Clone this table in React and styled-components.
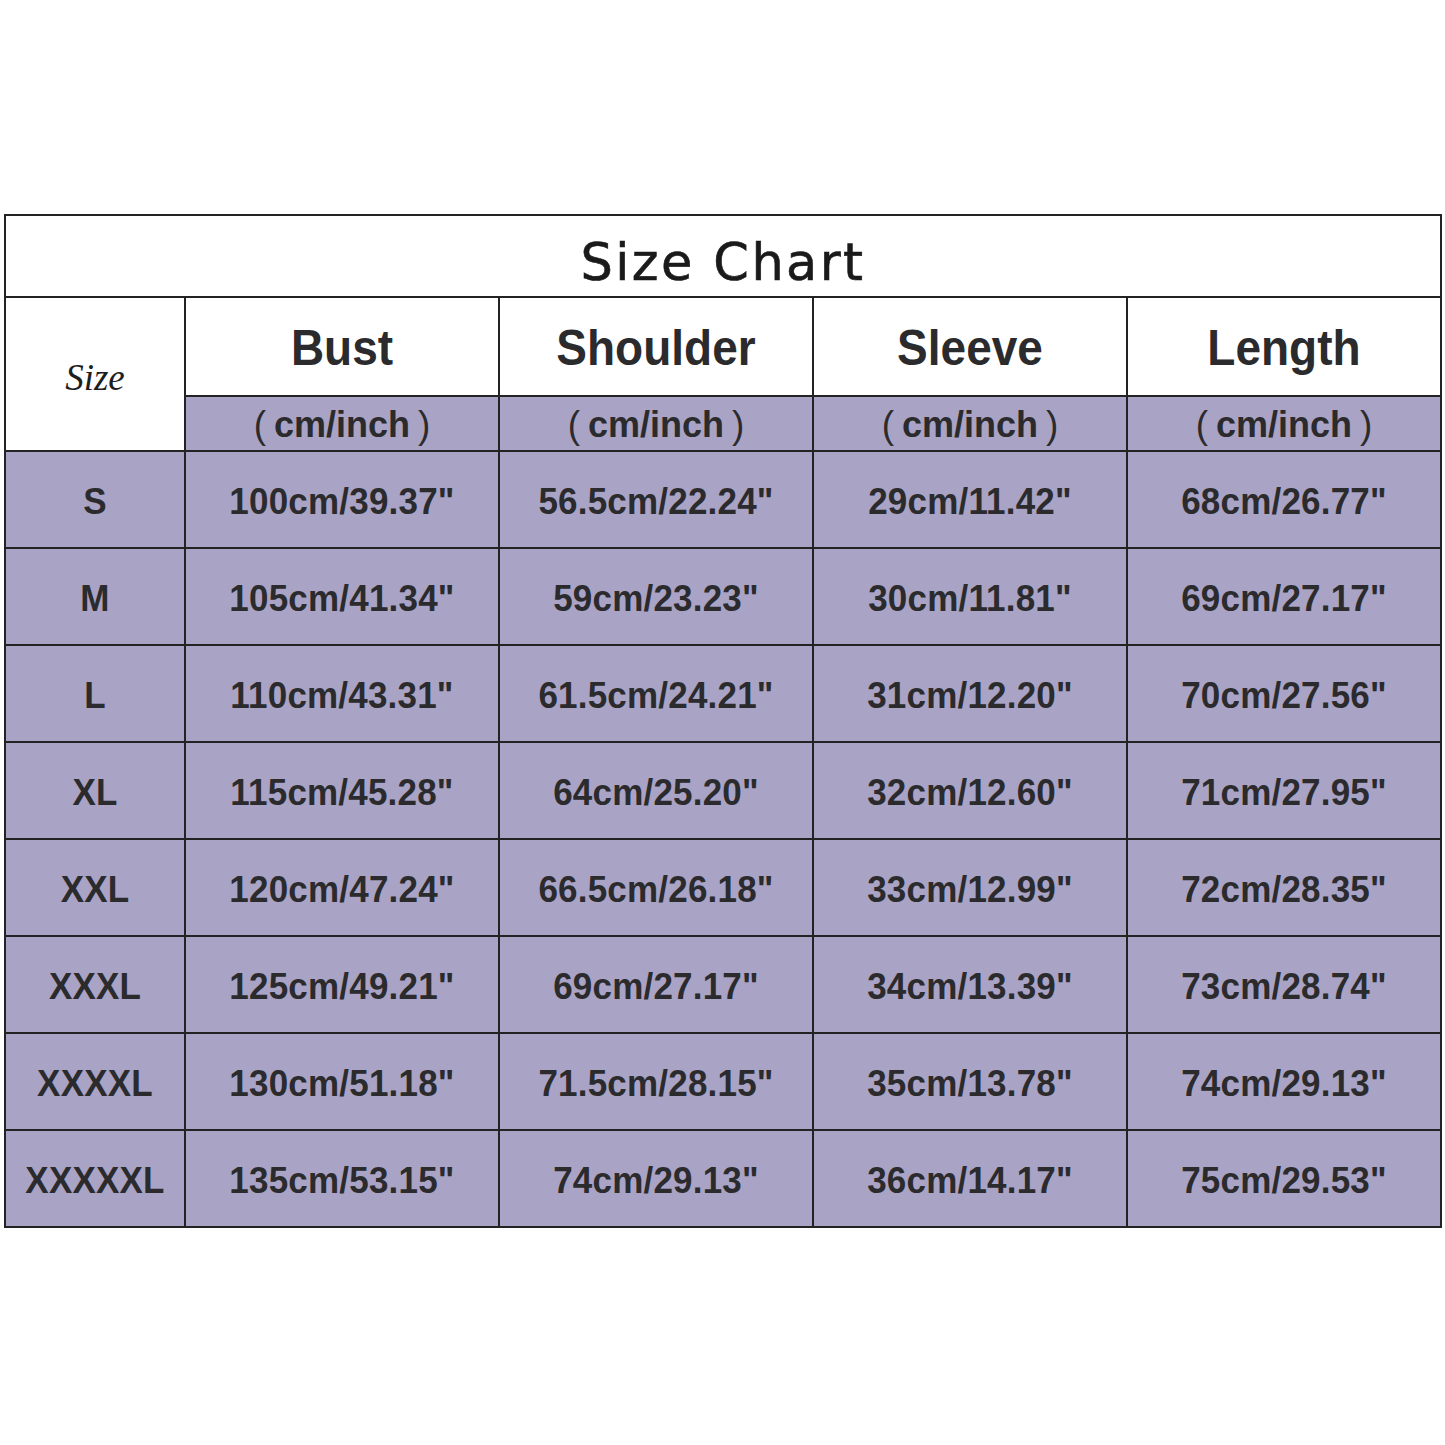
import React from 'react';
import styled, { createGlobalStyle } from 'styled-components';

const GlobalStyle = createGlobalStyle`
  html, body {
    margin: 0;
    padding: 0;
    background: #ffffff;
  }
  body {
    font-family: "Liberation Sans", Arial, sans-serif;
  }
`;

const lilac = '#a9a3c5';
const ink = '#2b2b2d';
const line = '#232323';

const columns = ['Bust', 'Shoulder', 'Sleeve', 'Length'];

const rows = [
  ['S', '100cm/39.37"', '56.5cm/22.24"', '29cm/11.42"', '68cm/26.77"'],
  ['M', '105cm/41.34"', '59cm/23.23"', '30cm/11.81"', '69cm/27.17"'],
  ['L', '110cm/43.31"', '61.5cm/24.21"', '31cm/12.20"', '70cm/27.56"'],
  ['XL', '115cm/45.28"', '64cm/25.20"', '32cm/12.60"', '71cm/27.95"'],
  ['XXL', '120cm/47.24"', '66.5cm/26.18"', '33cm/12.99"', '72cm/28.35"'],
  ['XXXL', '125cm/49.21"', '69cm/27.17"', '34cm/13.39"', '73cm/28.74"'],
  ['XXXXL', '130cm/51.18"', '71.5cm/28.15"', '35cm/13.78"', '74cm/29.13"'],
  ['XXXXXL', '135cm/53.15"', '74cm/29.13"', '36cm/14.17"', '75cm/29.53"'],
];

const Page = styled.div`
  width: 1445px;
  height: 1445px;
  padding: 214px 0 0 4px;
  box-sizing: border-box;
  overflow: hidden;
`;

const Chart = styled.div`
  display: grid;
  grid-template-columns: 180px repeat(4, 314px);
  grid-template-rows: 82px 99px 55px repeat(8, 97px);
  width: max-content;
  border-top: 2px solid ${line};
  border-left: 2px solid ${line};
`;

const Cell = styled.div`
  box-sizing: border-box;
  display: flex;
  align-items: center;
  justify-content: center;
  border-right: 2px solid ${line};
  border-bottom: 2px solid ${line};
  background: ${(p) => (p.$shaded ? lilac : '#ffffff')};
  color: ${ink};
  font-weight: bold;
  white-space: nowrap;
`;

const TitleCell = styled(Cell)`
  grid-column: 1 / span 5;
  font-family: "DejaVu Sans", Verdana, sans-serif;
  font-weight: normal;
  font-size: 51px;
  letter-spacing: 2.4px;
  color: #1a1a1a;
  padding-top: 12px;
  -webkit-text-stroke: 0.6px #1a1a1a;
`;

const SizeCorner = styled(Cell)`
  grid-row: 2 / span 2;
  font-family: "Liberation Serif", "Times New Roman", serif;
  font-style: italic;
  font-weight: normal;
  font-size: 37px;
  color: #1e1e1e;
  padding-top: 6px;
`;

const HeadCell = styled(Cell)`
  font-size: 46px;
  padding-top: 2px;
`;

const UnitCell = styled(Cell)`
  font-size: 36px;
  padding-top: 2px;
`;

const Paren = styled.span`
  font-weight: normal;
  font-size: 37px;
  display: inline-block;
  transform: scaleY(1.05);
  margin: ${(p) => (p.$right ? '0 0 0 8px' : '0 8px 0 0')};
`;

const DataCell = styled(Cell)`
  font-size: 35px;
  padding-top: 2px;
  letter-spacing: 0.2px;
`;

const Stretch = styled.span`
  display: inline-block;
  transform: scaleY(1.08);
`;

export default function App() {
  return (
    <Page>
      <GlobalStyle />
      <Chart>
        <TitleCell>Size Chart</TitleCell>
        <SizeCorner>Size</SizeCorner>
        {columns.map((c) => (
          <HeadCell key={c}>
            <Stretch>{c}</Stretch>
          </HeadCell>
        ))}
        {columns.map((c) => (
          <UnitCell key={`u-${c}`} $shaded>
            <Paren>(</Paren>cm/inch<Paren $right>)</Paren>
          </UnitCell>
        ))}
        {rows.map((r) =>
          r.map((v, i) => (
            <DataCell key={`${r[0]}-${i}`} $shaded>
              <Stretch>{v}</Stretch>
            </DataCell>
          ))
        )}
      </Chart>
    </Page>
  );
}
